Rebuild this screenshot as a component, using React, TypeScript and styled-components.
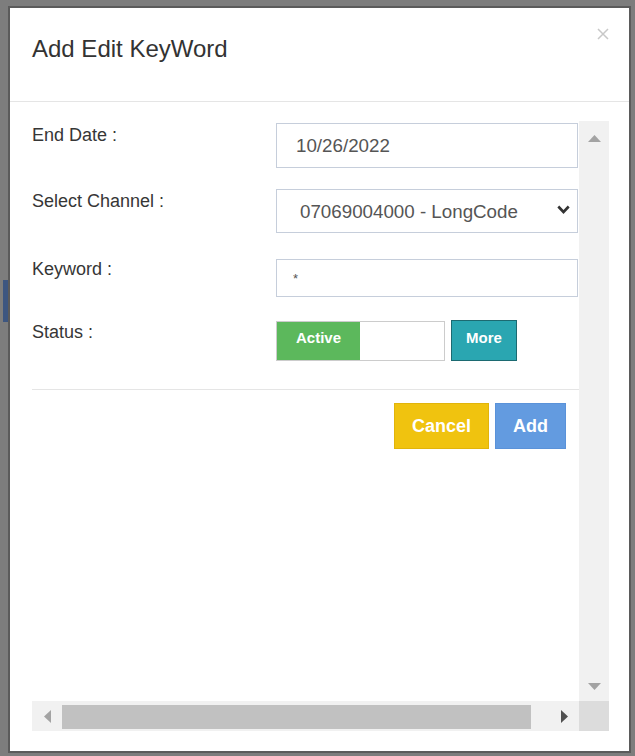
import React from "react";
import styled, { createGlobalStyle } from "styled-components";

const GlobalStyle = createGlobalStyle`
  html, body { margin: 0; padding: 0; }
  body {
    background: #7d7d7d;
    font-family: "Liberation Sans", Arial, sans-serif;
    width: 635px;
    height: 756px;
    overflow: hidden;
  }
  * { box-sizing: border-box; }
`;

const Page = styled.div`
  position: relative;
  width: 635px;
  height: 756px;
  padding: 6px 0 0 8px;
`;

const PageGlimpse = styled.div`
  position: absolute;
  left: 3px;
  top: 280px;
  width: 6px;
  height: 42px;
  background: #3d5680;
`;

const Modal = styled.div`
  position: relative;
  width: 623px;
  height: 747px;
  background: #fff;
  border: 2px solid #5b5b5b;
  display: flex;
  flex-direction: column;
`;

const Header = styled.div`
  flex: none;
  height: 94px;
  display: flex;
  justify-content: space-between;
  align-items: flex-start;
  padding: 20px 20px 0 22px;
  border-bottom: 1px solid #e5e5e5;
`;

const Title = styled.h4`
  margin: 8px 0 0;
  font-size: 24px;
  line-height: 26px;
  font-weight: 400;
  color: #333;
`;

const CloseButton = styled.button`
  border: 0;
  padding: 0;
  margin: 0;
  background: none;
  width: 12px;
  height: 12px;
  display: flex;
  cursor: pointer;
`;

const Body = styled.div`
  flex: 1;
  padding: 19px 20px 20px 22px;
  display: flex;
`;

const ScrollFrame = styled.div`
  flex: 1;
  display: grid;
  grid-template-columns: 1fr 30px;
  grid-template-rows: 1fr 30px;
`;

const Viewport = styled.div`
  overflow: hidden;
  padding-top: 2px;
`;

const Row = styled.div<{ $gap: number }>`
  display: flex;
  align-items: flex-start;
  margin-bottom: ${(p) => p.$gap}px;
`;

const Label = styled.label`
  flex: none;
  width: 244px;
  font-size: 18px;
  line-height: 25.7px;
  color: #363636;
`;

const TextInput = styled.input<{ $h: number; $pl: number; $mt?: number; $fs?: number }>`
  flex: none;
  width: 302px;
  height: ${(p) => p.$h}px;
  margin: ${(p) => p.$mt ?? 0}px 0 0;
  padding: 0 0 0 ${(p) => p.$pl}px;
  border: 1px solid #c6cedb;
  border-radius: 0;
  background: #fff;
  font-family: "Liberation Sans", Arial, sans-serif;
  font-size: ${(p) => p.$fs ?? 18.75}px;
  color: #555;
  outline: none;
`;

const SelectWrap = styled.div`
  position: relative;
  flex: none;
  width: 302px;
  height: 44px;
`;

const Select = styled.select`
  appearance: none;
  -webkit-appearance: none;
  width: 100%;
  height: 100%;
  margin: 0;
  padding: 0 0 0 23px;
  border: 1px solid #c6cedb;
  border-radius: 0;
  background: #fff;
  font-family: "Liberation Sans", Arial, sans-serif;
  font-size: 18.75px;
  color: #555;
  outline: none;
`;

const Chevron = styled.svg`
  position: absolute;
  right: 8px;
  top: 16px;
  pointer-events: none;
`;

const Toggle = styled.div`
  flex: none;
  display: flex;
  width: 169px;
  height: 40px;
  margin-top: 1px;
  border: 1px solid #cccccc;
  background: #fff;
`;

const ToggleOn = styled.div`
  width: 83px;
  background: #5cb85c;
  color: #fff;
  font-size: 15px;
  font-weight: 700;
  line-height: 21px;
  text-align: center;
  padding-top: 5px;
`;

const ToggleOff = styled.div`
  flex: 1;
`;

const MoreButton = styled.button`
  flex: none;
  margin-left: 6px;
  width: 66px;
  height: 41px;
  display: flex;
  justify-content: center;
  align-items: flex-start;
  padding: 6px 0 0;
  background: #2aa6b1;
  border: 1px solid #1c6a71;
  border-radius: 0;
  color: #fff;
  font-family: "Liberation Sans", Arial, sans-serif;
  font-size: 15px;
  font-weight: 700;
  line-height: 21px;
`;

const Divider = styled.div`
  height: 1px;
  margin-top: 28px;
  background: #e5e5e5;
`;

const Footer = styled.div`
  display: flex;
  justify-content: flex-end;
  gap: 6px;
  margin-top: 13px;
  padding-right: 13px;
`;

const tones = {
  warning: { bg: "#f0c30f", border: "#e1b40b" },
  primary: { bg: "#639be0", border: "#5a92d9" },
};

const ActionButton = styled.button<{ $tone: keyof typeof tones }>`
  height: 46px;
  padding: 0 17px;
  background: ${(p) => tones[p.$tone].bg};
  border: 1px solid ${(p) => tones[p.$tone].border};
  border-radius: 0;
  color: #fff;
  font-family: "Liberation Sans", Arial, sans-serif;
  font-size: 18px;
  font-weight: 700;
`;

const VBar = styled.div`
  background: #f1f1f1;
  display: flex;
  flex-direction: column;
  justify-content: space-between;
`;

const HBar = styled.div`
  background: #f1f1f1;
  display: flex;
`;

const ArrowButton = styled.div<{ $shift?: number }>`
  flex: none;
  width: 30px;
  height: 30px;
  display: flex;
  align-items: center;
  justify-content: center;
  padding-top: ${(p) => p.$shift ?? 0}px;
`;

const HTrack = styled.div`
  flex: 1;
  padding: 4px 0 2px;
`;

const Thumb = styled.div`
  width: 469px;
  height: 100%;
  background: #c1c1c1;
`;

const Corner = styled.div`
  background: #dcdcdc;
`;

type Dir = "up" | "down" | "left" | "right";

function Arrow({ dir, color }: { dir: Dir; color: string }) {
  const vertical = dir === "up" || dir === "down";
  const w = vertical ? 13 : 7;
  const h = vertical ? 7 : 13;
  const pts: Record<Dir, string> = {
    up: "0,7 6.5,0 13,7",
    down: "0,0 13,0 6.5,7",
    left: "7,0 7,13 0,6.5",
    right: "0,0 7,6.5 0,13",
  };
  return (
    <svg width={w} height={h} viewBox={`0 0 ${w} ${h}`}>
      <polygon points={pts[dir]} fill={color} />
    </svg>
  );
}

export default function App() {
  return (
    <>
      <GlobalStyle />
      <Page>
        <PageGlimpse />
        <Modal>
          <Header>
            <Title>Add Edit KeyWord</Title>
            <CloseButton aria-label="Close">
              <svg width="12" height="12" viewBox="0 0 12 12">
                <path d="M1 1 L11 11 M11 1 L1 11" stroke="#c8c8c8" strokeWidth="1.5" />
              </svg>
            </CloseButton>
          </Header>
          <Body>
            <ScrollFrame>
              <Viewport>
                <Row $gap={21}>
                  <Label>End Date :</Label>
                  <TextInput $h={45} $pl={19} defaultValue="10/26/2022" />
                </Row>
                <Row $gap={24}>
                  <Label>Select Channel :</Label>
                  <SelectWrap>
                    <Select defaultValue="07069004000">
                      <option value="07069004000">07069004000 - LongCode</option>
                    </Select>
                    <Chevron width="13" height="9" viewBox="0 0 13 9">
                      <path d="M1.3 1.5 L6.5 7 L11.7 1.5" fill="none" stroke="#333" strokeWidth="2.6" />
                    </Chevron>
                  </SelectWrap>
                </Row>
                <Row $gap={23}>
                  <Label>Keyword :</Label>
                  <TextInput $h={38} $pl={16} $mt={2} $fs={13} defaultValue="*" />
                </Row>
                <Row $gap={0}>
                  <Label>Status :</Label>
                  <Toggle>
                    <ToggleOn>Active</ToggleOn>
                    <ToggleOff />
                  </Toggle>
                  <MoreButton>More</MoreButton>
                </Row>
                <Divider />
                <Footer>
                  <ActionButton $tone="warning">Cancel</ActionButton>
                  <ActionButton $tone="primary">Add</ActionButton>
                </Footer>
              </Viewport>
              <VBar>
                <ArrowButton $shift={4}>
                  <Arrow dir="up" color="#a3a3a3" />
                </ArrowButton>
                <ArrowButton>
                  <Arrow dir="down" color="#a3a3a3" />
                </ArrowButton>
              </VBar>
              <HBar>
                <ArrowButton>
                  <Arrow dir="left" color="#a3a3a3" />
                </ArrowButton>
                <HTrack>
                  <Thumb />
                </HTrack>
                <ArrowButton>
                  <Arrow dir="right" color="#505050" />
                </ArrowButton>
              </HBar>
              <Corner />
            </ScrollFrame>
          </Body>
        </Modal>
      </Page>
    </>
  );
}
